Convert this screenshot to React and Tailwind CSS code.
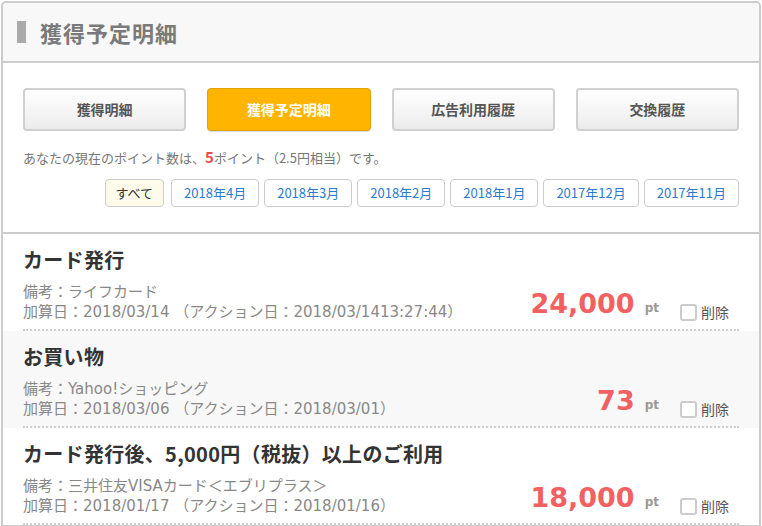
import React from 'react';

const jp = { fontFamily: '"Noto Sans CJK JP", "Noto Sans", sans-serif' };
const latinJp = { fontFamily: '"DejaVu Sans", "Noto Sans CJK JP", sans-serif' };
const verdanaLike = { fontFamily: '"DejaVu Sans", Verdana, sans-serif' };

const tabs = [
  { label: '獲得明細', active: false },
  { label: '獲得予定明細', active: true },
  { label: '広告利用履歴', active: false },
  { label: '交換履歴', active: false },
];

const months = ['2018年4月', '2018年3月', '2018年2月', '2018年1月', '2017年12月', '2017年11月'];

const items = [
  {
    title: 'カード発行',
    note: '備考：ライフカード',
    date: '加算日：2018/03/14 （アクション日：2018/03/1413:27:44）',
    points: '24,000',
    shaded: false,
  },
  {
    title: 'お買い物',
    note: '備考：Yahoo!ショッピング',
    date: '加算日：2018/03/06 （アクション日：2018/03/01）',
    points: '73',
    shaded: true,
  },
  {
    title: 'カード発行後、5,000円（税抜）以上のご利用',
    note: '備考：三井住友VISAカード＜エブリプラス＞',
    date: '加算日：2018/01/17 （アクション日：2018/01/16）',
    points: '18,000',
    shaded: false,
  },
];

// one row of the pending points list
const PointRow = ({ title, note, date, points, shaded }) => (
  <div className={shaded ? 'bg-[#f8f8f8] px-[20px]' : 'bg-white px-[20px]'}>
    <div className="border-b-2 border-dotted border-[#cfcfcf] pt-[12px] pb-[7px]">
      <h3 className="text-[20px] font-bold leading-[28px] tracking-[0.3px] text-[#333]">{title}</h3>
      <div className="mt-[8px] flex items-end justify-between">
        <div className="text-[15px] leading-[20px] text-[#888]" style={latinJp}>
          <p>{note}</p>
          <p>{date}</p>
        </div>
        <div className="flex items-end pr-[10px]">
          <span className="mb-[5px] text-[27px] font-bold leading-none text-[#f26161]" style={verdanaLike}>
            {points}
          </span>
          <span className="mb-[8px] ml-[10px] text-[12px] font-bold leading-none text-[#999]" style={verdanaLike}>
            pt
          </span>
          <label className="ml-[21px] flex items-center gap-[4px] text-[14px] leading-[20px] text-[#555]">
            <span className="inline-block h-[17px] w-[17px] rounded-[3px] border-2 border-[#ccc] bg-white" />
            削除
          </label>
        </div>
      </div>
    </div>
  </div>
);

export default function App() {
  return (
    <div className="h-[526px] w-[762px] overflow-hidden bg-white" style={jp}>
      <div className="ml-px mt-px w-[760px] rounded-t-[5px] border-2 border-[#ccc]">
        {/* header */}
        <div className="flex h-[60px] items-center gap-[14px] rounded-t-[4px] border-b-2 border-[#ccc] bg-[#f8f8f8] pl-[14px]">
          <span className="h-[22px] w-[9px] bg-[#aaa]" />
          <h2 className="text-[22px] font-bold tracking-[1px] text-[#7a7a7a]">獲得予定明細</h2>
        </div>

        {/* tabs + filter */}
        <div className="border-b-2 border-[#ccc] px-[20px] pt-[25px] pb-[25px]">
          <div className="grid grid-cols-4 gap-[21px]">
            {tabs.map((t) =>
              t.active ? (
                <div
                  key={t.label}
                  className="flex h-[43px] items-center justify-center rounded-[4px] border border-[#e3a300] bg-[#ffb400] text-[14px] font-bold text-white shadow-[0_1px_1px_rgba(0,0,0,0.15)]"
                >
                  {t.label}
                </div>
              ) : (
                <div
                  key={t.label}
                  className="flex h-[43px] items-center justify-center rounded-[4px] border-2 border-[#d0d0d0] bg-gradient-to-b from-white to-[#ececec] text-[14px] font-bold text-[#555]"
                >
                  {t.label}
                </div>
              )
            )}
          </div>

          <p className="mt-[16px] text-[13px] leading-[20px] text-[#777]">
            あなたの現在のポイント数は、
            <span className="text-[15px] font-bold text-[#e94b4b]">5</span>
            ポイント（2.5円相当）です。
          </p>

          <div className="mt-[11px] flex justify-end gap-[5px]">
            <span className="mr-[2px] flex h-[28px] items-center rounded-[4px] border border-[#ccc] bg-[#fffbea] px-[10px] text-[13px] text-[#333]">
              すべて
            </span>
            {months.map((m) => (
              <span
                key={m}
                className="flex h-[28px] items-center rounded-[4px] border border-[#ccc] bg-white px-[12px] text-[13px] text-[#2a7bd0]"
              >
                {m}
              </span>
            ))}
          </div>
        </div>

        {/* list */}
        {items.map((it) => (
          <PointRow key={it.title} {...it} />
        ))}
      </div>
    </div>
  );
}
